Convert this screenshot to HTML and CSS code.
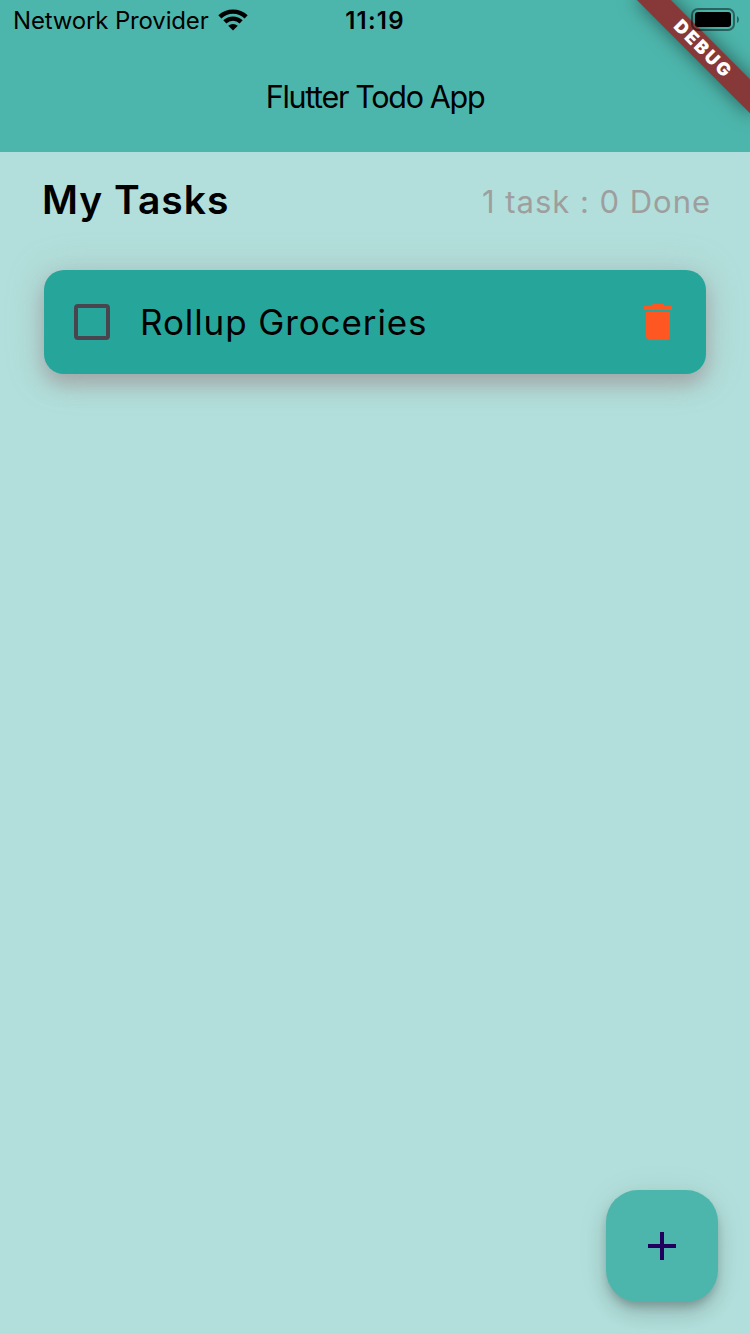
FILE: index.html
```html
<!DOCTYPE html>
<html lang="en">
<head>
<meta charset="utf-8">
<title>Flutter Todo App</title>
<link rel="stylesheet" href="styles.css">
</head>
<body>
<div class="screen">
  <header class="app-bar">
    <div class="status-bar">
      <div class="carrier">
        <span class="carrier-name">Network Provider</span>
        <svg class="wifi" width="30" height="22" viewBox="0 0 30 22">
          <path d="M0.3 6.300A21 20 0 0 1 29.7 6.300L26.600 9.400A16.500 16.500 0 0 0 3.400 9.400Z"/>
          <path d="M5.300 11.300A14 14 0 0 1 24.700 11.300L21.600 14.400A9.500 9.500 0 0 0 8.400 14.400Z"/>
          <path d="M10.200 16.800A7 7 0 0 1 19.800 16.800L15 21.600Z"/>
        </svg>
      </div>
      <time class="clock">11:19</time>
      <svg class="battery" width="50" height="24" viewBox="0 0 50 24">
        <rect x="1" y="1" width="42" height="21" rx="6" fill="none" stroke="#000" stroke-opacity=".45" stroke-width="2"/>
        <rect x="4" y="4" width="36" height="15" rx="3"/>
        <path d="M46 8Q48 9 48 11.500Q48 14 46 15Z" fill-opacity=".45"/>
      </svg>
    </div>
    <h1 class="app-title"><span class="title-text">Flutter Todo App</span></h1>
  </header>
  <main class="content">
    <div class="summary">
      <h2 class="heading">My Tasks</h2>
      <span class="count">1 task : 0 Done</span>
    </div>
    <article class="task">
      <span class="checkbox"></span>
      <span class="task-name">Rollup Groceries</span>
      <svg class="trash" width="28" height="36" viewBox="0 0 28 36">
        <path d="M2 32Q2 36 6 36H22Q26 36 26 32V8H2ZM28 2H21L19 0H9L7 2H0V6H28Z"/>
      </svg>
    </article>
  </main>
  <button class="add" aria-label="Add task">
    <svg width="28" height="28" viewBox="0 0 28 28"><path d="M12 0H16V12H28V16H16V28H12V16H0V12H12Z"/></svg>
  </button>
  <div class="banner"><span class="banner-text">DEBUG</span></div>
</div>
</body>
</html>
```
FILE: styles.css
```css
* { box-sizing: border-box; }
body { margin: 0; font-family: Inter, "Liberation Sans", sans-serif; color: #000; }
.screen {
  position: relative;
  width: 750px;
  height: 1334px;
  overflow: hidden;
  display: flex;
  flex-direction: column;
  background: #b2dfdb;
}
.app-bar { height: 152px; background: #4db6ac; }
.status-bar {
  position: relative;
  z-index: 2;
  height: 40px;
  padding: 0 9px 0 13px;
  display: grid;
  grid-template-columns: 1fr 60px 1fr;
  align-items: start;
}
.carrier { display: flex; align-items: flex-start; gap: 9px; }
.carrier-name { font-size: 24px; line-height: 40px; padding-top: 1px; letter-spacing: -0.16px; white-space: nowrap; }
.wifi { flex: none; margin-top: 9px; }
.clock {
  font-size: 24px;
  line-height: 40px;
  padding-top: 1px;
  font-weight: 600;
  letter-spacing: 1.2px;
  text-align: center;
  white-space: nowrap;
  margin-left: -4px;
}
.battery { justify-self: end; margin-top: 8px; }
.app-title {
  margin: 0;
  height: 112px;
  font-size: 30.5px;
  line-height: 114px;
  font-weight: 400;
  letter-spacing: -1.32px;
  text-align: center;
}
.content { padding: 18px 44px 0; }
.summary {
  height: 60px;
  margin: 0 -4px 0 -2px;
  display: flex;
  align-items: center;
  justify-content: space-between;
}
.heading { margin: 0; padding-bottom: 1px; font-size: 39px; font-weight: 600; letter-spacing: 1px; }
.count { padding-top: 2px; margin-right: -1px; font-size: 31px; font-weight: 400; letter-spacing: 0.97px; color: #9e9e9e; }
.task {
  height: 104px;
  margin-top: 40px;
  padding: 0 34px 0 30px;
  display: flex;
  align-items: center;
  border-radius: 20px;
  background: #26a69a;
  box-shadow: 0 10px 20px rgba(158, 158, 158, 0.8), 0 2px 36px rgba(158, 158, 158, 0.35);
}
.checkbox { width: 36px; height: 36px; border: 4px solid #49454f; border-radius: 4px; }
.task-name { flex: 1; margin-left: 30px; font-size: 35px; line-height: 104px; letter-spacing: 0.9px; }
.trash { fill: #ff5722; }
.add {
  position: absolute;
  right: 32px;
  bottom: 32px;
  width: 112px;
  height: 112px;
  display: flex;
  align-items: center;
  justify-content: center;
  padding: 0;
  border: 0;
  border-radius: 32px;
  background: #4db6ac;
  fill: #21005d;
  box-shadow: 0 6px 10px -2px rgba(0, 0, 0, 0.2), 0 12px 20px rgba(0, 0, 0, 0.14), 0 2px 36px rgba(0, 0, 0, 0.06);
}
.banner {
  position: absolute;
  z-index: 1;
  top: 56px;
  left: 670px;
  width: 160px;
  height: 24px;
  transform: rotate(45deg);
  transform-origin: 80px -56px;
  background: #873939;
  box-shadow: 0 0 20px rgba(0, 0, 0, 0.5);
  color: #fff;
  font-size: 18px;
  line-height: 23px;
  font-weight: 900;
  text-align: center;
}
.banner-text { letter-spacing: 2.3px; margin-right: -3.5px; }
```
